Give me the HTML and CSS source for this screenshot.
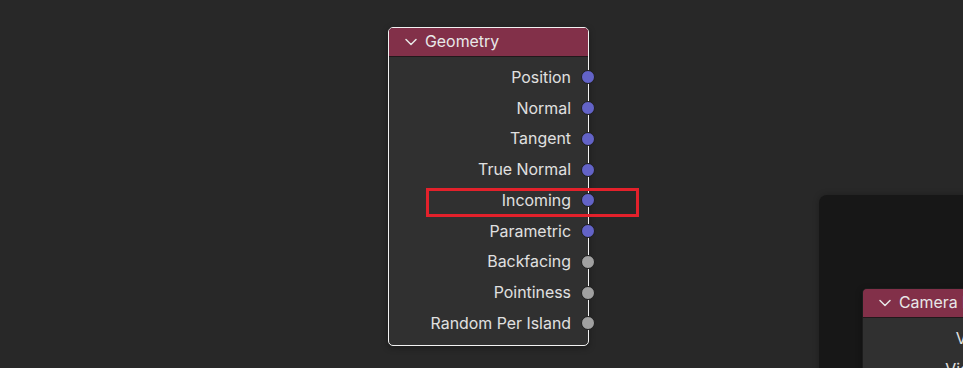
FILE: index.html
```html
<!DOCTYPE html>
<html lang="en">

<head>
    <meta charset="UTF-8">
    <title>Node Editor</title>
    <link rel="stylesheet" href="styles.css">
</head>

<body>
    <div class="canvas">
        <div class="frame-panel"></div>

        <div class="node node-geometry selected">
            <div class="node-header">
                <svg class="chevron" width="12" height="8" viewBox="0 0 12 8">
                    <path d="M1 1.5 L6 6.5 L11 1.5" fill="none" stroke="#e6e6e6" stroke-width="1.5" stroke-linecap="round" stroke-linejoin="round"/>
                </svg>
                <span>Geometry</span>
            </div>
            <div class="node-body">
                <div class="row"><span>Position</span><i class="socket vector"></i></div>
                <div class="row"><span>Normal</span><i class="socket vector"></i></div>
                <div class="row"><span>Tangent</span><i class="socket vector"></i></div>
                <div class="row"><span>True Normal</span><i class="socket vector"></i></div>
                <div class="row"><span>Incoming</span><i class="socket vector"></i></div>
                <div class="row"><span>Parametric</span><i class="socket vector"></i></div>
                <div class="row"><span>Backfacing</span><i class="socket float"></i></div>
                <div class="row"><span>Pointiness</span><i class="socket float"></i></div>
                <div class="row"><span>Random Per Island</span><i class="socket float"></i></div>
            </div>
        </div>

        <div class="highlight"></div>

        <div class="node node-camera">
            <div class="node-header">
                <svg class="chevron" width="12" height="8" viewBox="0 0 12 8">
                    <path d="M1 1.5 L6 6.5 L11 1.5" fill="none" stroke="#e6e6e6" stroke-width="1.5" stroke-linecap="round" stroke-linejoin="round"/>
                </svg>
                <span>Camera Data</span>
            </div>
            <div class="node-body">
                <div class="row"><span>View Vector</span><i class="socket vector"></i></div>
                <div class="row"><span>View Z Depth</span><i class="socket float"></i></div>
                <div class="row"><span>View Distance</span><i class="socket float"></i></div>
            </div>
        </div>
    </div>
</body>

</html>
```

FILE: styles.css
```css
html,
body {
    margin: 0;
    height: 100%;
    overflow: hidden;
}

body {
    background-color: #282828;
    font-family: Inter, "Noto Sans", sans-serif;
    color: #e0e0e0;
}

.canvas {
    position: relative;
    width: 963px;
    height: 368px;
    overflow: hidden;
}

.frame-panel {
    position: absolute;
    left: 819px;
    top: 195px;
    width: 300px;
    height: 300px;
    background-color: #171717;
    border-radius: 8px;
    box-shadow: 0 0 6px rgba(0, 0, 0, 0.25);
}

.node {
    position: absolute;
    background-color: #303030;
    border-radius: 5px;
    box-shadow: 0 2px 6px rgba(0, 0, 0, 0.35);
}

.node-geometry {
    left: 388px;
    top: 27px;
    width: 199px;
    border: 1px solid #f2f2f2;
}

.node-camera {
    left: 862px;
    top: 288px;
    width: 200px;
    border: 1px solid #1c1c1c;
}

.node-header {
    display: flex;
    align-items: center;
    gap: 8px;
    height: 28px;
    padding-left: 16px;
    background-color: #823049;
    border-radius: 4px 4px 0 0;
    border-bottom: 1px solid #22181b;
    font-size: 15.9px;
    color: #e8e8e8;
}

.node-header span {
    line-height: 28px;
}

.node-body {
    display: flex;
    flex-direction: column;
    padding: 5px 0 6px;
}

.row {
    display: flex;
    align-items: center;
    justify-content: flex-end;
    height: 30.75px;
    font-size: 15.9px;
    position: relative;
}

.row span {
    margin-right: 17px;
}

.socket {
    position: absolute;
    right: -7px;
    top: 50%;
    width: 12px;
    height: 12px;
    margin-top: -7px;
    border-radius: 50%;
    border: 1px solid #1e1e1e;
}

.socket.vector {
    background-color: #6363c7;
}

.socket.float {
    background-color: #a1a1a1;
}

.highlight {
    position: absolute;
    left: 426px;
    top: 188px;
    width: 207px;
    height: 23px;
    border: 3px solid #e3212b;
}
```
